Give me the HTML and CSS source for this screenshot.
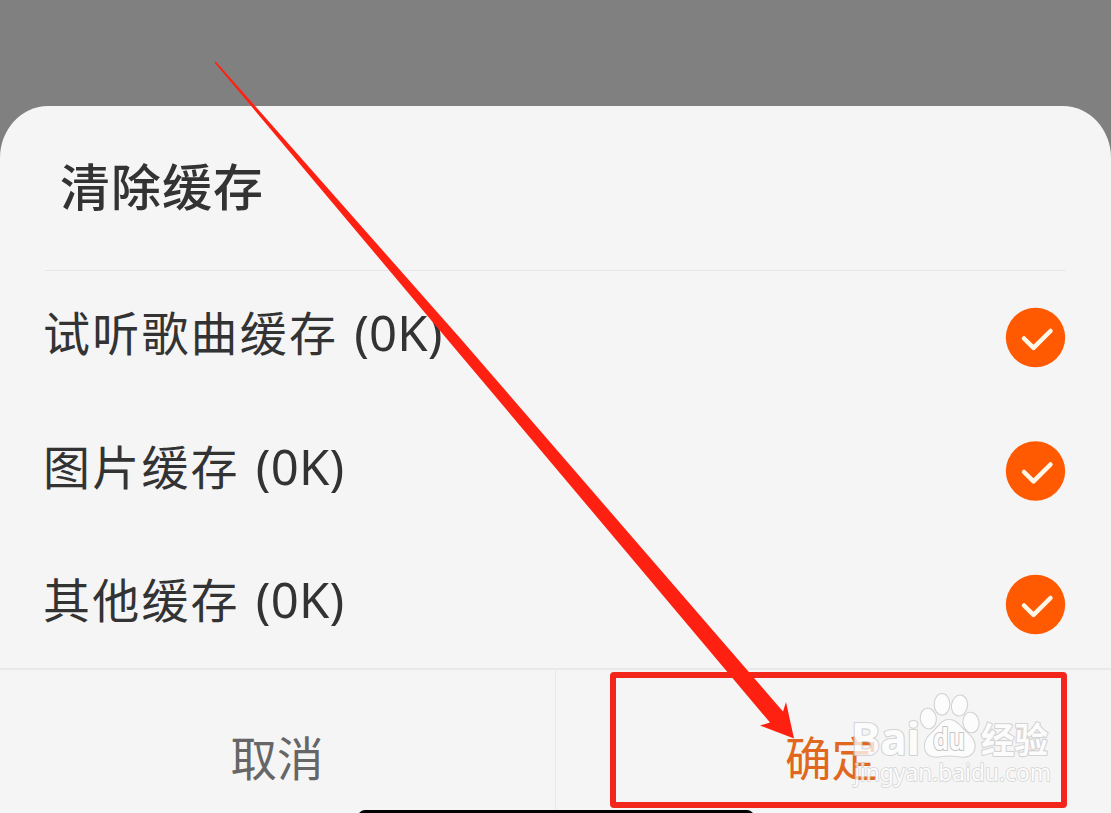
FILE: index.html
```html
<!DOCTYPE html>
<html lang="zh-CN">
<head>
<meta charset="utf-8">
<title>清除缓存</title>
<link rel="stylesheet" href="styles.css">
</head>
<body>
<main class="screen">
  <section class="sheet">
    <header class="sheet-header"><h1 class="title">清除缓存</h1></header>
    <ul class="list">
      <li class="row"><span class="label">试听歌曲缓存<span class="size">(0K)</span></span>
        <svg class="check" viewBox="0 0 60 60"><circle cx="29.5" cy="29.5" r="29.7"/><path d="M18 30.500 27.500 39.800 44.500 23"/></svg></li>
      <li class="row"><span class="label">图片缓存<span class="size">(0K)</span></span>
        <svg class="check" viewBox="0 0 60 60"><circle cx="29.5" cy="30" r="29.7"/><path d="M18 31 27.500 40.300 44.500 23.500"/></svg></li>
      <li class="row"><span class="label">其他缓存<span class="size">(0K)</span></span>
        <svg class="check" viewBox="0 0 60 60"><circle cx="29.5" cy="29.5" r="29.7"/><path d="M18 30.500 27.500 39.800 44.500 23"/></svg></li>
    </ul>
    <footer class="actions">
      <button class="action cancel">取消</button>
      <button class="action confirm">确定</button>
    </footer>
  </section>
  <div class="home-bar"></div>
  <svg class="watermark" viewBox="840 685 225 110" width="225" height="110">
    <g class="mark">
      <text class="brand" x="851" y="754.500" textLength="69" lengthAdjust="spacingAndGlyphs">Bai</text>
      <ellipse cx="928.3" cy="718.5" rx="7.500" ry="9.800" transform="rotate(-8 928.3 718.5)"/>
      <ellipse cx="942" cy="704.3" rx="7.300" ry="10.200"/>
      <ellipse cx="959.5" cy="705.5" rx="7.500" ry="10" transform="rotate(10 959.5 705.5)"/>
      <ellipse cx="971" cy="722.5" rx="7.500" ry="9.800" transform="rotate(-8 971 722.5)"/>
      <path d="M949 720C957 720 960 727 966 732C973 738 976 743 974 750C971 757 964 757.500 957 756Q949 755 942 756C934 757.500 928 756.500 925.500 750C923.500 743 927 737 933 732C939 727 941 720 949 720Z"/>
      <text class="du" x="933" y="749.500" textLength="32" lengthAdjust="spacingAndGlyphs">du</text>
      <text class="brand-cn" x="981" y="753" textLength="67" lengthAdjust="spacingAndGlyphs">经验</text>
      <text class="site" x="854" y="781" textLength="197" lengthAdjust="spacingAndGlyphs">jingyan.baidu.com</text>
    </g>
  </svg>
  <div class="highlight"></div>
  <svg class="arrow" viewBox="0 0 1111 813" width="1111" height="813">
    <path d="M214.500 62.500 215.800 61.500 460 338 783 711.500 786 702 794 738.500 760 725.500 770 722.500 460 354.500Z"/>
  </svg>
</main>
</body>
</html>
```
FILE: styles.css
```css
* { box-sizing: border-box; }
body { margin: 0; }
.screen {
  position: relative;
  width: 1111px;
  height: 813px;
  padding-top: 106px;
  overflow: hidden;
  background: #808080;
  font-family: "Noto Sans CJK SC", sans-serif;
  color: #333;
}
.sheet {
  display: flex;
  flex-direction: column;
  height: 707px;
  background: #f5f5f5;
  border-radius: 48px 48px 0 0 / 52px 52px 0 0;
}
.sheet-header {
  display: flex;
  align-items: center;
  flex: none;
  height: 165px;
  margin: 0 45px;
  padding: 0 0 8px 15px;
  border-bottom: 1px solid #e6e6e6;
}
.title {
  margin: 0;
  font-size: 50px;
  line-height: 60px;
  font-weight: 500;
  letter-spacing: 1px;
}
.list {
  flex: none;
  height: 397px;
  margin: 0;
  padding: 0 45px 0 43px;
  list-style: none;
}
.row {
  display: flex;
  align-items: center;
  justify-content: space-between;
  height: 133.5px;
}
.label {
  padding-bottom: 12px;
  font-size: 47px;
  line-height: 60px;
  font-weight: 400;
  letter-spacing: 2.2px;
  white-space: nowrap;
}
.size {
  margin-left: 16px;
  font-family: "Noto Sans", sans-serif;
  font-size: 49px;
  letter-spacing: .2px;
}
.check { width: 60px; height: 60px; overflow: visible; }
.check circle { fill: #ff5902; }
.check path {
  fill: none;
  stroke: #fff7e8;
  stroke-width: 4.5;
  stroke-linecap: round;
  stroke-linejoin: round;
}
.actions {
  display: grid;
  grid-template-columns: 556px 1fr;
  flex: 1;
  border-top: 2px solid #e9e9e9;
}
.action {
  display: flex;
  justify-content: center;
  padding: 54px 0 0;
  border: 0;
  background: none;
  font: 400 46.5px/64px "Noto Sans CJK SC", sans-serif;
}
.cancel { padding-right: 1px; color: #666; border-right: 1px solid #e9e9e9; }
.confirm { padding-right: 4px; color: #e16720; }
.home-bar {
  position: absolute;
  left: 358px;
  top: 810px;
  width: 396px;
  height: 14px;
  border-radius: 7px;
  background: #000;
}
.watermark { position: absolute; left: 840px; top: 685px; }
.mark {
  fill: #fff;
  stroke: #c8c8c8;
  stroke-width: 2.2;
  stroke-linejoin: round;
  paint-order: stroke;
  opacity: .75;
}
.brand { font: 700 45px "Noto Sans", sans-serif; }
.du { font: 700 30px "Noto Sans", sans-serif; stroke: #b4b4b4; }
.brand-cn { font: 700 35px "Noto Sans CJK SC", sans-serif; }
.site { font: 400 24px "Noto Sans", sans-serif; stroke-width: 1.6; }
.highlight {
  position: absolute;
  left: 610px;
  top: 672px;
  width: 457px;
  height: 136px;
  border: 6px solid #f3261b;
  border-radius: 4px;
}
.arrow { position: absolute; left: 0; top: 0; fill: #fe2112; }
```
